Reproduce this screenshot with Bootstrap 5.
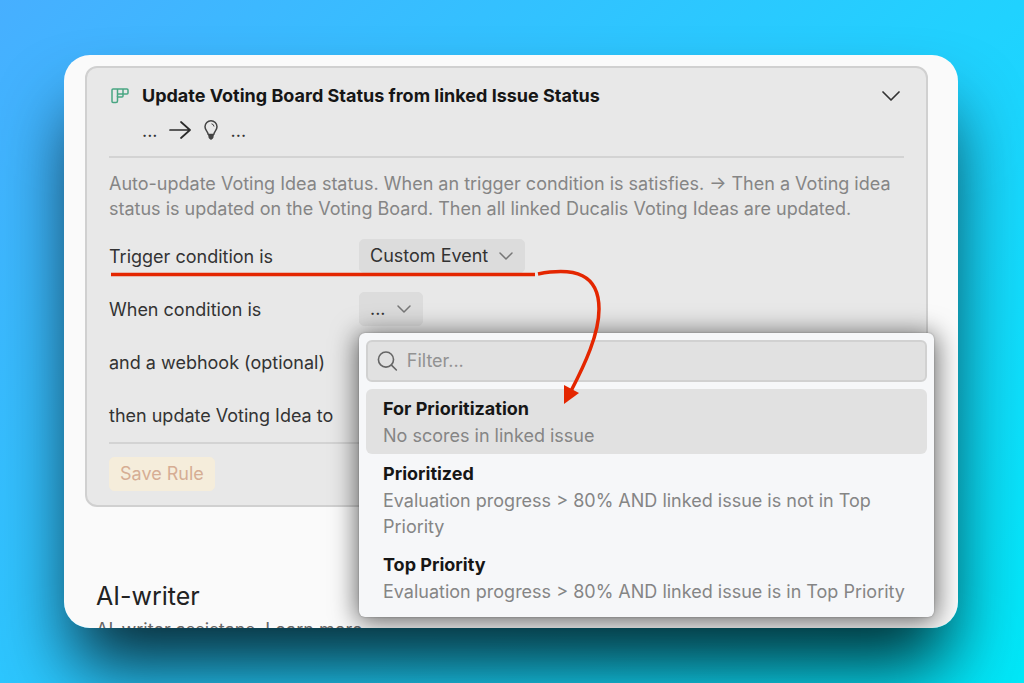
<!DOCTYPE html>
<html lang="en">
<head>
<meta charset="utf-8">
<meta name="viewport" content="width=device-width, initial-scale=1">
<title>Update Voting Board Status</title>
<link href="https://cdn.jsdelivr.net/npm/bootstrap@5.3.0/dist/css/bootstrap.min.css" rel="stylesheet">
<style>
  body {
    font-family: Inter, "Liberation Sans", sans-serif;
    font-size: 18px;
    line-height: 25px;
    color: #333;
    min-height: 100vh;
    background: linear-gradient(135deg, #47afff 0%, #20d2ff 60%, #00e8f8 100%);
    padding: 55px 66px 55px 64px;
    overflow: hidden;
  }
  .stage {
    height: calc(100vh - 110px);
    padding: 11px 30px 0 21px;
    background: #fafafa;
    border-radius: 26px;
  }
  .stage-shadow { border-radius: 26px; box-shadow: 0 48px 72px -10px rgba(0, 0, 0, .8); }
  .rule-card {
    --bs-card-bg: #e8e8e8;
    --bs-card-border-color: #d0d0d0;
    --bs-card-border-radius: 12px;
    border-width: 2px;
    padding: 14px 22px 14px;
  }
  .rule-title { font-size: 18px; line-height: 28px; font-weight: 700; color: #161616; }
  .rule-icon { width: 33px; }
  .rule-flow { height: 26px; margin: 7px 0 13px 33px; gap: 11px; }
  .rule-line { border-top: 2px solid #d3d3d3; }
  .rule-text { color: #858585; margin: 13px 0 18px; }
  .rule-rows { display: grid; row-gap: 19px; margin-bottom: 10px; }
  .rule-row { display: grid; grid-template-columns: 250px 1fr; align-items: center; min-height: 34px; }
  .rule-actions { margin-top: 13px; }
  .btn-soft, .btn-save {
    --bs-btn-font-size: 18px;
    --bs-btn-line-height: 24px;
    --bs-btn-padding-x: 10px;
    --bs-btn-padding-y: 4px;
    --bs-btn-border-radius: 5px;
  }
  .btn-soft { --bs-btn-color: #333; --bs-btn-bg: #dcdcdc; --bs-btn-border-color: #dcdcdc; gap: 10px; }
  .btn-save {
    --bs-btn-disabled-color: #d6ad94;
    --bs-btn-disabled-bg: #f5eddb;
    --bs-btn-disabled-border-color: #f5eddb;
    --bs-btn-disabled-opacity: 1;
  }
  .pick-menu {
    --bs-dropdown-bg: #f6f7f9;
    --bs-dropdown-border-width: 0;
    --bs-dropdown-border-radius: 6px;
    --bs-dropdown-padding-x: 7px;
    --bs-dropdown-padding-y: 7px;
    --bs-dropdown-font-size: 18px;
    top: calc(100% + 7px);
    left: 0;
    right: -30px;
    box-shadow: 0 0 2px rgba(0, 0, 0, .3), 0 3px 26px 2px rgba(0, 0, 0, .6);
  }
  .pick-filter { border: 2px solid #d1d1d1; border-radius: 6px; background: #e1e1e1; height: 42px; padding: 0 9px; gap: 9px; margin-bottom: 7px; }
  .pick-filter input { font-size: 18px; line-height: 24px; background: none !important; color: #333; }
  .pick-filter input::placeholder { color: #929292; }
  .pick-menu .dropdown-item {
    --bs-dropdown-item-padding-x: 17px;
    --bs-dropdown-item-padding-y: 5px;
    --bs-dropdown-link-active-bg: #e1e1e1;
    --bs-dropdown-link-active-color: #858585;
    border-radius: 6px;
    line-height: 26px;
    white-space: normal;
    color: #858585;
  }
  .pick-menu .dropdown-item strong { display: block; font-weight: 700; color: #161616; line-height: 29px; }
  .callout { left: 0; top: 0; z-index: 1100; pointer-events: none; overflow: visible; }
  .next-part { margin: 71px 0 0 11px; }
  .next-title { font-size: 25px; line-height: 36px; font-weight: 400; color: #222; margin-bottom: 3px; }
  .next-text, .next-text a { color: #666; text-decoration: none; }
</style>
</head>
<body>
<div class="stage-shadow">
<main class="stage position-relative overflow-hidden">
  <section class="card rule-card">
    <header class="d-flex align-items-center">
      <span class="rule-icon d-flex">
        <svg width="22" height="18" viewBox="0 0 22 18" fill="none" stroke="#4aa683" stroke-width="1.5" aria-hidden="true">
          <path d="M4 2H18Q19 2 19 3V6Q19 7 18 7H14V9Q14 10 13 10H8.500V14Q8.500 15.500 7 15.500H4Q3 15.500 3 14.500V3Q3 2 4 2Z"/>
          <path d="M8.500 2V10M14 2V7M8.500 7H14" />
        </svg>
      </span>
      <h1 class="rule-title mb-0 flex-grow-1">Update Voting Board Status from linked Issue Status</h1>
      <button type="button" class="btn p-0 border-0 d-flex me-1" aria-label="Collapse rule">
        <svg width="18" height="18" viewBox="0 0 18 18" fill="none" stroke="#333" stroke-width="1.700" stroke-linecap="round" stroke-linejoin="round"><path d="M1 5L9 13L17 5"/></svg>
      </button>
    </header>
    <div class="rule-flow d-flex align-items-center">
      <span>...</span>
      <svg width="22" height="20" viewBox="0 0 22 20" fill="none" stroke="#2b2b2b" stroke-width="1.700" stroke-linecap="round" stroke-linejoin="round" aria-hidden="true"><path d="M1 10H21M12 2L21 10L12 18"/></svg>
      <svg width="18" height="20" viewBox="-1 0 18 20" fill="none" stroke="#444" stroke-width="1.500" stroke-linejoin="round" aria-hidden="true">
        <path d="M5.200 14.500C5 11.500 2 10.500 2 6.800A6 6 0 0 1 14 6.800C14 10.500 11 11.500 10.800 14.500Z"/>
        <path d="M8.500 3.800Q10.800 4.200 11 6.500" stroke-width="1"/>
        <path d="M5.500 15H10.500L10 18L8.800 19.300H7.200L6 18Z" fill="#444" stroke-width=".6"/>
      </svg>
      <span>...</span>
    </div>
    <div class="rule-line"></div>
    <p class="rule-text">Auto-update Voting Idea status. When an trigger condition is satisfies. → Then a Voting idea status is updated on the Voting Board. Then all linked Ducalis Voting Ideas are updated.</p>

    <div class="rule-rows">
      <div class="rule-row position-relative">
        <span>Trigger condition is</span>
        <div>
          <button type="button" class="btn btn-soft d-inline-flex align-items-center">Custom Event
            <svg width="16" height="14" viewBox="0 0 16 14" fill="none" stroke="#777" stroke-width="1.500" stroke-linecap="round" stroke-linejoin="round" aria-hidden="true"><path d="M2 4L8 10L14 4"/></svg>
          </button>
        </div>
        <svg class="callout position-absolute" width="500" height="170" viewBox="0 0 500 170" fill="none" stroke="#e42600" stroke-width="3.500" aria-hidden="true">
          <path d="M2 35.500H426"/>
          <path d="M429 35C466 28 490 35 490 70C490 95 476 125 462 152"/>
          <path d="M455 165V146L470 154Z" fill="#e42600" stroke="none"/>
        </svg>
      </div>
      <div class="rule-row">
        <span>When condition is</span>
        <div class="dropdown">
          <button type="button" class="btn btn-soft d-inline-flex align-items-center" aria-expanded="true" aria-label="Condition">...
            <svg width="16" height="14" viewBox="0 0 16 14" fill="none" stroke="#777" stroke-width="1.500" stroke-linecap="round" stroke-linejoin="round" aria-hidden="true"><path d="M2 4L8 10L14 4"/></svg>
          </button>
          <div class="dropdown-menu pick-menu show">
            <label class="pick-filter d-flex align-items-center">
              <svg width="22" height="22" viewBox="0 0 22 22" fill="none" stroke="#666" stroke-width="1.700" stroke-linecap="round" aria-hidden="true"><circle cx="9.500" cy="9.500" r="8"/><path d="M15.300 15.300L20.500 20.500"/></svg>
              <input type="text" class="form-control border-0 p-0 shadow-none" placeholder="Filter..." aria-label="Filter">
            </label>
            <a href="#" class="dropdown-item active"><strong>For Prioritization</strong>No scores in linked issue</a>
            <a href="#" class="dropdown-item"><strong>Prioritized</strong>Evaluation progress &gt; 80% AND linked issue is not in Top Priority</a>
            <a href="#" class="dropdown-item"><strong>Top Priority</strong>Evaluation progress &gt; 80% AND linked issue is in Top Priority</a>
          </div>
        </div>
      </div>
      <div class="rule-row"><span>and a webhook (optional)</span></div>
      <div class="rule-row"><span>then update Voting Idea to</span></div>
    </div>
    <div class="rule-line"></div>
    <div class="rule-actions"><button type="button" class="btn btn-save" disabled>Save Rule</button></div>
  </section>

  <section class="next-part">
    <h2 class="next-title">AI-writer</h2>
    <p class="next-text mb-0">AI-writer assistans. <a href="#">Learn more</a></p>
  </section>
</main>
</div>
<script src="https://cdn.jsdelivr.net/npm/bootstrap@5.3.0/dist/js/bootstrap.bundle.min.js"></script>
</body>
</html>
